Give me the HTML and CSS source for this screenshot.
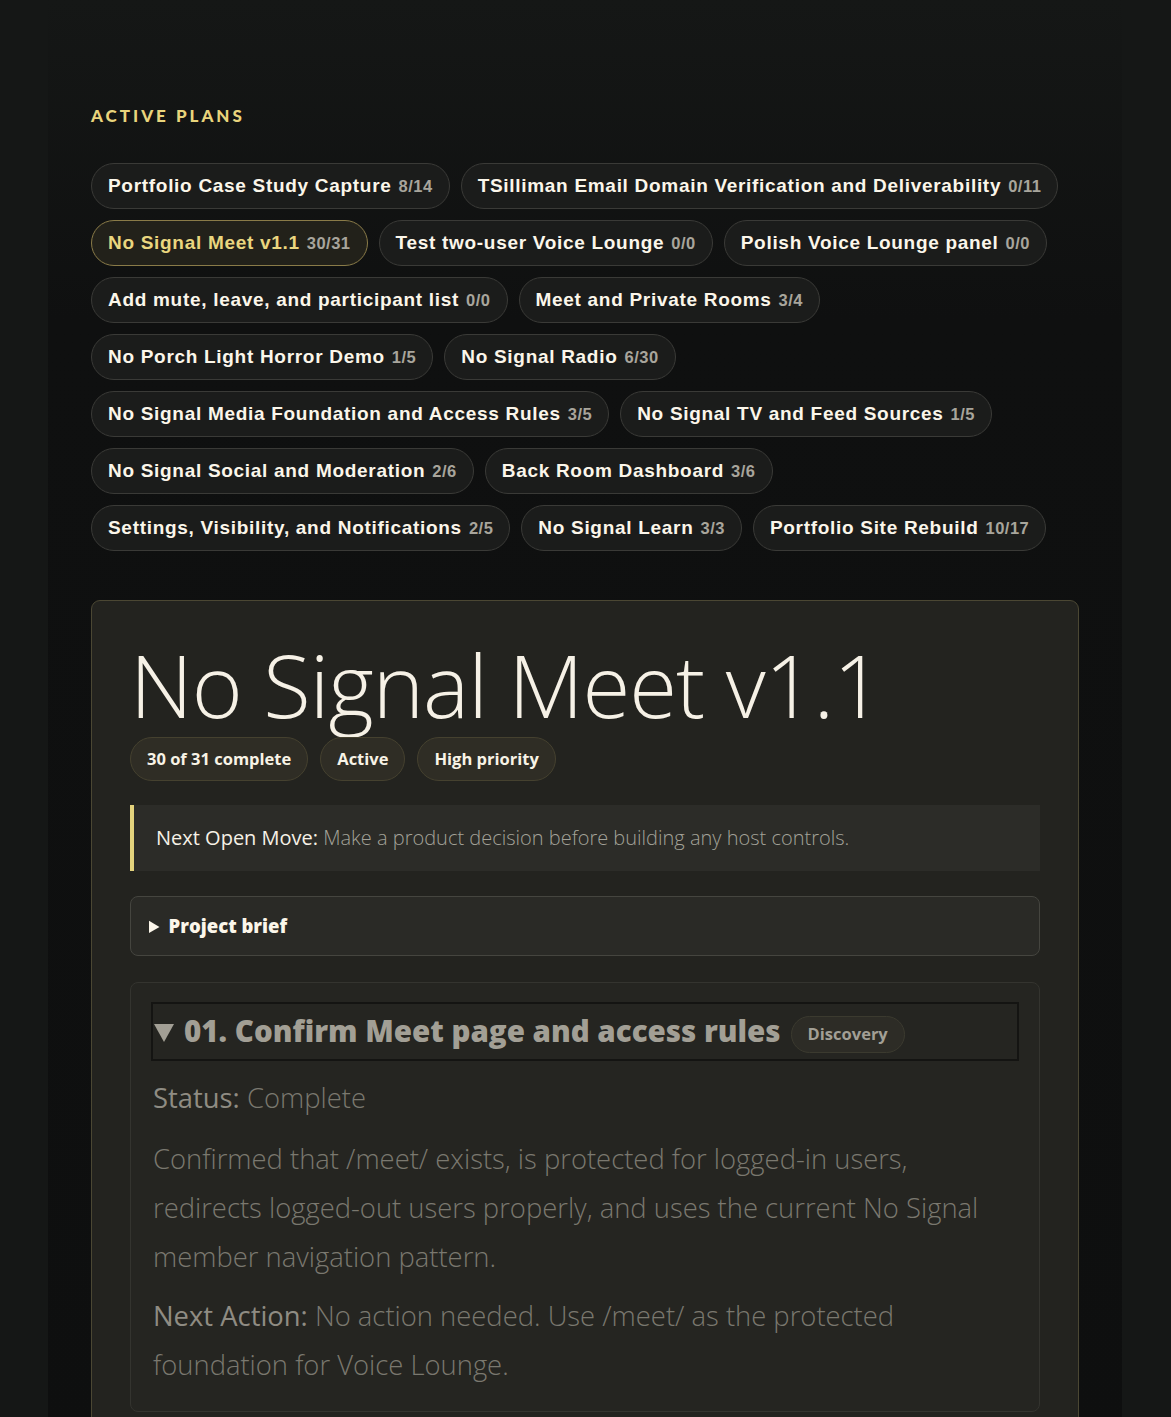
FILE: index.html
```html
<!DOCTYPE html>
<html lang="en">
  <head>
    <meta charset="UTF-8" />
    <title>Active Plans</title>
    <link rel="stylesheet" href="styles.css">
  </head>
  <body>
    <main class="page">
      <h2 class="section-label">Active Plans</h2>

      <nav class="plan-list">
        <a class="plan-pill" href="#">Portfolio Case Study Capture <span class="count">8/14</span></a>
        <a class="plan-pill" href="#">TSilliman Email Domain Verification and Deliverability <span class="count">0/11</span></a>
        <a class="plan-pill is-current" href="#">No Signal Meet v1.1 <span class="count">30/31</span></a>
        <a class="plan-pill" href="#">Test two-user Voice Lounge <span class="count">0/0</span></a>
        <a class="plan-pill" href="#">Polish Voice Lounge panel <span class="count">0/0</span></a>
        <a class="plan-pill" href="#">Add mute, leave, and participant list <span class="count">0/0</span></a>
        <a class="plan-pill" href="#">Meet and Private Rooms <span class="count">3/4</span></a>
        <a class="plan-pill" href="#">No Porch Light Horror Demo <span class="count">1/5</span></a>
        <a class="plan-pill" href="#">No Signal Radio <span class="count">6/30</span></a>
        <a class="plan-pill" href="#">No Signal Media Foundation and Access Rules <span class="count">3/5</span></a>
        <a class="plan-pill" href="#">No Signal TV and Feed Sources <span class="count">1/5</span></a>
        <a class="plan-pill" href="#">No Signal Social and Moderation <span class="count">2/6</span></a>
        <a class="plan-pill" href="#">Back Room Dashboard <span class="count">3/6</span></a>
        <a class="plan-pill" href="#">Settings, Visibility, and Notifications <span class="count">2/5</span></a>
        <a class="plan-pill" href="#">No Signal Learn <span class="count">3/3</span></a>
        <a class="plan-pill" href="#">Portfolio Site Rebuild <span class="count">10/17</span></a>
      </nav>

      <article class="plan-card">
        <h1 class="plan-title">No Signal Meet v1.1</h1>
        <div class="plan-meta">
          <span class="meta-badge">30 of 31 complete</span>
          <span class="meta-badge">Active</span>
          <span class="meta-badge">High priority</span>
        </div>

        <div class="next-move">
          <strong>Next Open Move:</strong> Make a product decision before building any host controls.
        </div>

        <details class="brief">
          <summary>Project brief</summary>
        </details>

        <section class="step is-done">
          <details open>
            <summary>
              <span class="step-title">01. Confirm Meet page and access rules</span>
              <span class="phase">Discovery</span>
            </summary>
            <p><strong>Status:</strong> Complete</p>
            <p>Confirmed that /meet/ exists, is protected for logged-in users, redirects logged-out users properly, and uses the current No Signal member navigation pattern.</p>
            <p><strong>Next Action:</strong> No action needed. Use /meet/ as the protected foundation for Voice Lounge.</p>
          </details>
        </section>
      </article>
    </main>
  </body>
</html>
```

FILE: styles.css
```css
body {
  margin: 0;
  background-color: #151716;
  color: #f4efe2;
  font-family: "Open Sans", sans-serif;
}
.page {
  width: 1074px;
  margin: 0 49px 0 48px;
  padding: 104px 43px 40px;
  box-sizing: border-box;
  min-height: 1417px;
  background: linear-gradient(to bottom, #151716 0, #0f1010 320px, #0e0f0f 100%);
}

.section-label {
  margin: 0 0 35px;
  font-family: Lato, sans-serif;
  font-weight: 900;
  font-size: 17px;
  line-height: 24px;
  letter-spacing: 3px;
  text-transform: uppercase;
  color: #e9d47c;
}

.plan-list {
  display: flex;
  flex-wrap: wrap;
  gap: 11px 11px;
  margin-bottom: 49px;

  .plan-pill {
    display: flex;
    align-items: baseline;
    gap: 7px;
    height: 46px;
    box-sizing: border-box;
    padding: 12px 16px;
    border: 1px solid #3a3a37;
    border-radius: 999px;
    background-color: #1b1c1b;
    color: #fbf6ea;
    text-decoration: none;
    font-family: "Liberation Sans", Arial, sans-serif;
    font-weight: 700;
    font-size: 19px;
    line-height: 20px;
    letter-spacing: 0.7px;
    white-space: nowrap;
  }
  .count {
    font-size: 16.5px;
    line-height: 20px;
    letter-spacing: 0.5px;
    color: #a8a59c;
  }
  .is-current {
    border-color: #8a7b48;
    background-color: #22211a;
    color: #ead67f;
  }
}

.plan-card {
  padding: 34px 38px 40px;
  border: 1px solid #4b4733;
  border-radius: 9px;
  background-color: #23231f;
}

.plan-title {
  margin: 0 0 4px;
  font-family: "Open Sans", sans-serif;
  font-weight: 300;
  font-size: 87px;
  line-height: 98px;
  letter-spacing: -1px;
  color: #f6f1e6;
}

.plan-meta {
  display: flex;
  gap: 12px;
  margin-bottom: 24px;

  .meta-badge {
    padding: 10px 16px 11px;
    border: 1px solid #45412f;
    border-radius: 999px;
    background-color: #2f2d25;
    font-weight: 700;
    font-size: 16.5px;
    line-height: 21px;
    color: #f8f3e6;
  }
}

.next-move {
  padding: 20px 22px;
  border-left: 4px solid #e3d27c;
  background-color: #2c2c28;
  font-weight: 300;
  font-size: 20px;
  line-height: 26px;
  color: #a3a298;

  strong {
    font-weight: 400;
    color: #f6f1e6;
  }
}

.brief {
  margin-top: 25px;
  border: 1px solid #45453f;
  border-radius: 8px;
  background-color: #2a2a26;

  summary {
    padding: 17px 18px;
    font-weight: 800;
    font-size: 18.5px;
    line-height: 24px;
    color: #fbf6ea;
    cursor: pointer;
  }
}

.step {
  margin-top: 26px;
  padding: 19px 20px 22px;
  border: 1px solid #34342f;
  border-radius: 8px;
  background-color: #252521;

  summary {
    display: flex;
    align-items: center;
    gap: 10px;
    padding: 4px 0 6px;
    border: 2px solid #141412;
    list-style: none;
    cursor: pointer;
  }
  /* open-state arrow, drawn as a css triangle */
  summary::before {
    content: "";
    width: 0;
    height: 0;
    margin: 4px 0 0 1px;
    border-left: 10px solid transparent;
    border-right: 10px solid transparent;
    border-top: 18px solid #a29f95;
  }
  .step-title {
    font-weight: 800;
    font-size: 29.5px;
    line-height: 38px;
    color: #a29f95;
  }
  .phase {
    padding: 6px 16px 7px;
    border: 1px solid #3b3a2f;
    border-radius: 999px;
    background-color: #2d2c26;
    font-weight: 700;
    font-size: 16.5px;
    line-height: 22px;
    color: #a29f95;
    margin-top: 8px;
  }
  p {
    margin: 12px 2px 0;
    font-weight: 300;
    font-size: 27.4px;
    line-height: 49px;
    color: #7a786f;
  }
  p + p + p {
    margin-top: 10px;
  }
  p strong {
    font-weight: 400;
    color: #8f8c83;
  }
}
```
